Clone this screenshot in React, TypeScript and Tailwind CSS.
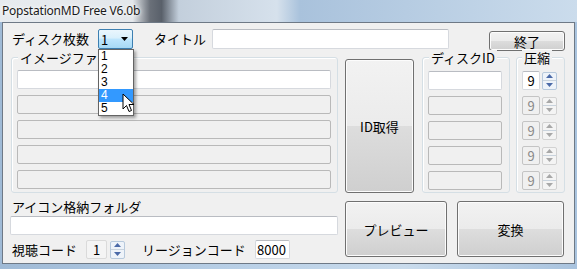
import React from "react";

// Win7 風のフォーム部品
function TextBox({ w, value, disabled }: { w: string; value?: string; disabled?: boolean }) {
  return (
    <div
      className={
        disabled
          ? `${w} h-[19px] rounded-[2px] border border-[#b9b9b9] bg-[#f0f0f0]`
          : `${w} h-[19px] rounded-[2px] border border-[#d6d9de] border-t-[#b9bcc2] bg-white px-[2px] text-[13px] leading-[17px]`
      }
    >
      {value}
    </div>
  );
}

function SpinArrows({ disabled }: { disabled?: boolean }) {
  const arrow = disabled ? "#a8a8a8" : "#4b6aa8";
  return (
    <div
      className={
        disabled
          ? "flex h-[18px] w-[15px] flex-col rounded-[2px] border border-[#d2d2d2] bg-[#f4f4f4]"
          : "flex h-[18px] w-[15px] flex-col rounded-[2px] border border-[#b7c9dc] bg-[#eef3f9]"
      }
    >
      <div className="flex flex-1 items-center justify-center border-b border-[#c9d3dd]">
        <svg width="7" height="4" viewBox="0 0 7 4">
          <path d="M0 4 L3.5 0 L7 4 Z" fill={arrow} />
        </svg>
      </div>
      <div className="flex flex-1 items-center justify-center">
        <svg width="7" height="4" viewBox="0 0 7 4">
          <path d="M0 0 L3.5 4 L7 0 Z" fill={arrow} />
        </svg>
      </div>
    </div>
  );
}

function NumBox({ w, value, disabled, soft }: { w: string; value: string; disabled?: boolean; soft?: boolean }) {
  let cls = `${w} flex h-[19px] items-center justify-center rounded-[2px] border border-[#d6d9de] border-t-[#b9bcc2] bg-white text-[13px] leading-none`;
  if (disabled) cls = `${w} flex h-[19px] items-center justify-center rounded-[2px] border border-[#c4c4c4] bg-[#f0f0f0] text-[13px] leading-none text-[#8a8a8a]`;
  if (soft) cls = `${w} flex h-[19px] items-center justify-center rounded-[2px] border border-[#dadada] bg-[#f4f4f4] text-[13px] leading-none`;
  return <div className={cls}>{value}</div>;
}

function Button({ className, children }: { className: string; children: React.ReactNode }) {
  return (
    <div
      className={`${className} flex items-center justify-center rounded-[3px] border border-[#707070] bg-[linear-gradient(to_bottom,#f2f2f2_0%,#ebebeb_50%,#dddddd_50%,#cfcfcf_100%)] text-[13px] leading-none shadow-[inset_0_0_0_1px_#fcfcfc]`}
    >
      {children}
    </div>
  );
}

function Group({ className, label, labelClass, children }: { className: string; label: string; labelClass: string; children: React.ReactNode }) {
  return (
    <div className={`${className} relative rounded-[3px] border border-[#d5dfe5] shadow-[inset_1px_1px_0_#ffffff]`}>
      <span className={`${labelClass} absolute top-[-8px] bg-[#f0f0f0] px-[2px] text-[13px] leading-[15px]`}>{label}</span>
      {children}
    </div>
  );
}

const ROWS = [0, 1, 2, 3, 4];

export default function App() {
  return (
    <div className="relative h-[269px] w-[577px] overflow-hidden bg-[linear-gradient(to_right,#9fbad6_0%,#b8cfe6_40%,#c9dbec_70%,#a9c3de_100%)] font-['Noto_Sans_CJK_JP',sans-serif] text-[13px] text-black">
      {/* タイトルバー */}
      <div className="flex h-[22px] items-center bg-[linear-gradient(to_right,#e7ebef_0%,#e3e7eb_23%,#6a7079_26%,#59606a_28%,#c3cfdc_31%,#d6e1ec_48%,#a9c2dc_52%,#cbdcec_100%)] pl-[2px] font-['Noto_Sans',sans-serif] text-[12px] tracking-[-0.2px] text-[#1a1a1a] [text-shadow:0_0_6px_#ffffff,0_0_3px_#ffffff]">
        PopstationMD Free V6.0b
      </div>

      {/* クライアント領域 */}
      <div className="ml-[2px] h-[242px] w-[573px] border border-[#6e7986] bg-[#f0f0f0]">
        {/* 1 行目 */}
        <div className="mt-[6px] flex h-[21px] items-start pl-[9px]">
          <span className="w-[80px] leading-[20px]">ディスク枚数</span>
          <div className="ml-[6px] flex h-[20px] w-[35px] items-center justify-between rounded-[2px] border border-[#3c7fb1] bg-[linear-gradient(to_bottom,#eaf6fd_0%,#d9f0fc_45%,#bee6fd_50%,#a7d9f5_100%)] pl-[2px] pr-[4px] text-[13px] leading-none">
            <span>1</span>
            <svg width="7" height="4" viewBox="0 0 7 4">
              <path d="M0 0 L7 0 L3.5 4 Z" fill="#000" />
            </svg>
          </div>
          <span className="ml-[21px] w-[52px] leading-[20px]">タイトル</span>
          <div className="ml-[6px] h-[20px] w-[237px] rounded-[2px] border border-[#d6d9de] border-t-[#b9bcc2] bg-white" />
          <Button className="ml-[40px] mt-[2px] h-[20px] w-[76px]">終了</Button>
        </div>

        {/* 中段 */}
        <div className="mt-[7px] flex h-[136px] items-start pl-[8px]">
          <Group className="h-[136px] w-[327px]" label="イメージファイル" labelClass="left-[6px]">
            <div className="flex flex-col gap-[6px] pl-[5px] pt-[12px]">
              {ROWS.map((i) => (
                <TextBox key={i} w="w-[314px]" disabled={i > 0} />
              ))}
            </div>
          </Group>

          <Button className="ml-[7px] mt-[2px] h-[134px] w-[69px]">ID取得</Button>

          <Group className="ml-[8px] h-[136px] w-[88px]" label="ディスクID" labelClass="left-[6px]">
            <div className="flex flex-col gap-[6px] pl-[5px] pt-[13px]">
              {ROWS.map((i) => (
                <TextBox key={i} w="w-[74px]" disabled={i > 0} />
              ))}
            </div>
          </Group>

          <Group className="ml-[6px] h-[136px] w-[49px]" label="圧縮" labelClass="left-[5px]">
            <div className="flex flex-col gap-[6px] pl-[5px] pt-[13px]">
              {ROWS.map((i) => (
                <div key={i} className="flex items-center gap-[2px]">
                  <NumBox w="w-[18px]" value="9" disabled={i > 0} />
                  <SpinArrows disabled={i > 0} />
                </div>
              ))}
            </div>
          </Group>
        </div>

        {/* 下段 */}
        <div className="flex items-start pl-[7px]">
          <div className="flex w-[328px] flex-col">
            <span className="mt-[6px] pl-[2px] leading-[16px]">アイコン格納フォルダ</span>
            <div className="mt-[1px] h-[19px] w-[328px] rounded-[2px] border border-[#d6d9de] border-t-[#b9bcc2] bg-white" />
            <div className="mt-[5px] flex h-[19px] items-center">
              <span className="w-[74px] pl-[2px]">視聴コード</span>
              <NumBox w="ml-[2px] w-[21px]" value="1" soft />
              <div className="ml-[3px]">
                <SpinArrows />
              </div>
              <span className="ml-[17px] w-[106px]">リージョンコード</span>
              <div className="ml-[7px] flex h-[19px] w-[35px] items-center rounded-[2px] border border-[#d6d9de] border-t-[#b9bcc2] bg-white pl-[1px] text-[13px] leading-none">
                8000
              </div>
            </div>
          </div>
          <Button className="ml-[7px] mt-[8px] h-[56px] w-[102px]">プレビュー</Button>
          <Button className="ml-[10px] mt-[8px] h-[56px] w-[107px]">変換</Button>
        </div>
      </div>

      {/* ドロップダウンリスト (開いた状態) */}
      <div className="absolute left-[98px] top-[49px] flex w-[36px] flex-col border border-[#646464] bg-white font-['Liberation_Sans',sans-serif] text-[12px] leading-[13px] shadow-[2px_2px_3px_rgba(0,0,0,0.35)]">
        {["1", "2", "3", "4", "5"].map((n) => (
          <div key={n} className={n === "4" ? "h-[13px] bg-[#3399ff] pl-[2px] text-white" : "h-[13px] pl-[2px]"}>
            {n}
          </div>
        ))}
      </div>

      {/* マウスカーソル */}
      <svg className="absolute left-[122px] top-[93px]" width="13" height="21" viewBox="0 0 13 21">
        <path d="M1 1 L1 16 L4.5 12.5 L7 18.5 L9.5 17.5 L7 11.5 L12 11.5 Z" fill="#ffffff" stroke="#000000" strokeWidth="1" strokeLinejoin="round" />
      </svg>
    </div>
  );
}
